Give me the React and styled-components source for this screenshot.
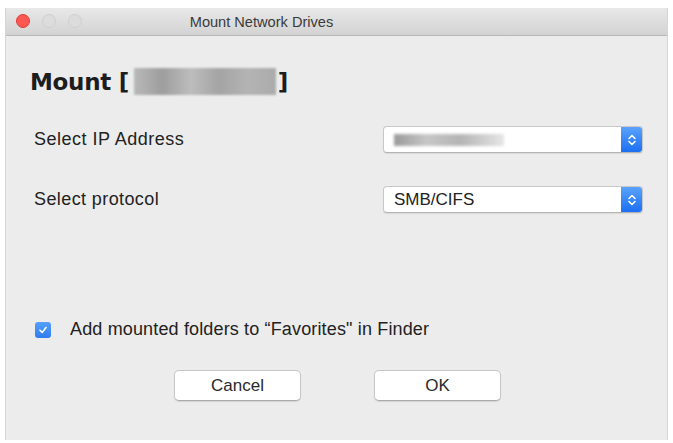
import React, { useState } from 'react';
import styled, { createGlobalStyle } from 'styled-components';

const GlobalStyle = createGlobalStyle`
  html, body {
    margin: 0;
    padding: 0;
    background: #ffffff;
    font-family: "Liberation Sans", Arial, sans-serif;
  }
`;

const Page = styled.div`
  width: 673px;
  height: 443px;
  box-sizing: border-box;
  padding: 8px 5px 3px 5px;
`;

const Window = styled.div`
  height: 100%;
  display: flex;
  flex-direction: column;
  background: #ececec;
  border-left: 1px solid #d6d6d6;
  border-right: 1px solid #d6d6d6;
  box-sizing: border-box;
`;

// title sits left of centre: the original window was wider than the crop
const TitleBar = styled.div`
  height: 27px;
  position: relative;
  display: flex;
  align-items: center;
  justify-content: center;
  padding-right: 150px;
  background: linear-gradient(#e8e8e8, #d3d3d3);
  border-bottom: 1px solid #b8b8b8;
  font-size: 14.6px;
  color: #3a3a3a;
`;

const Lights = styled.div`
  position: absolute;
  left: 10px;
  top: 6px;
  display: flex;
  gap: 12px;
`;

const Light = styled.span`
  width: 14px;
  height: 14px;
  border-radius: 50%;
  box-sizing: border-box;
  background: ${p => (p.red ? '#fc5753' : '#dcdcdc')};
  border: 1px solid ${p => (p.red ? '#df3d39' : '#cfcfcf')};
`;

const Content = styled.div`
  flex: 1;
  display: flex;
  flex-direction: column;
  padding: 32px 24px 0 24px;
`;

const Heading = styled.h1`
  margin: 0 0 31px 0;
  display: flex;
  align-items: center;
  font-family: "DejaVu Sans", sans-serif;
  font-size: 23px;
  font-weight: bold;
  color: #1d1d1d;
  letter-spacing: -0.3px;
`;

const Blurred = styled.span`
  display: inline-block;
  width: 142px;
  height: 27px;
  margin: 0 2px 0 5px;
  background: linear-gradient(90deg, #b9b9b9, #9e9e9e 20%, #bdbdbd 40%, #a4a4a4 60%, #b4b4b4 80%, #ababab);
  filter: blur(1px);
`;

const Row = styled.div`
  display: flex;
  align-items: center;
  justify-content: space-between;
  height: 27px;
  margin-bottom: 33px;
  padding-left: 4px;
`;

const Label = styled.span`
  font-size: 18px;
  letter-spacing: ${p => p.spacing || '0.5px'};
  color: #222;
`;

const Select = styled.div`
  width: 258px;
  height: 25px;
  display: flex;
  background: #ffffff;
  border: 1px solid #c8c8c8;
  border-bottom-color: #b4b4b4;
  border-radius: 4px;
  box-shadow: 0 1px 1px rgba(0, 0, 0, 0.08);
  overflow: hidden;
`;

const SelectText = styled.div`
  flex: 1;
  display: flex;
  align-items: center;
  padding-left: 10px;
  font-size: 17px;
  color: #222;
`;

const BlurValue = styled.span`
  width: 110px;
  height: 12px;
  background: linear-gradient(90deg, #9a9a9a, #c6c6c6 30%, #b4b4b4 60%, #e6e6e6);
  filter: blur(1.5px);
`;

const Stepper = styled.div`
  width: 21px;
  display: flex;
  align-items: center;
  justify-content: center;
  background: linear-gradient(#5aa2fb, #1c6ff2);
`;

const Spacer = styled.div`
  flex: 1;
`;

const CheckRow = styled.label`
  display: flex;
  align-items: center;
  gap: 19px;
  padding-left: 5px;
  margin-bottom: 30px;
  font-size: 18px;
  letter-spacing: 0.15px;
  color: #222;
`;

const Box = styled.span`
  width: 16px;
  height: 16px;
  border-radius: 3px;
  background: linear-gradient(#56a0fa, #2f7cf0);
  display: flex;
  align-items: center;
  justify-content: center;
`;

const Buttons = styled.div`
  display: flex;
  gap: 73px;
  padding-left: 144px;
  margin-bottom: 39px;
`;

const Button = styled.button`
  width: 127px;
  height: 31px;
  background: #ffffff;
  border: 1px solid #c6c6c6;
  border-bottom-color: #aaaaaa;
  border-radius: 5px;
  box-shadow: 0 1px 1px rgba(0, 0, 0, 0.1);
  font-family: "Liberation Sans", Arial, sans-serif;
  font-size: 17px;
  color: #2a2a2a;
`;

const Chevrons = () => (
  <svg width="10" height="14" viewBox="0 0 10 14">
    <path d="M2 5.5 L5 2.5 L8 5.5 M2 8.5 L5 11.5 L8 8.5" fill="none" stroke="#fff" strokeWidth="1.5" strokeLinecap="round" strokeLinejoin="round" />
  </svg>
);

const App = () => {
  const [checked] = useState(true);

  return (
    <Page>
      <GlobalStyle />
      <Window>
        <TitleBar>
          <Lights>
            <Light red />
            <Light />
            <Light />
          </Lights>
          Mount Network Drives
        </TitleBar>
        <Content>
          <Heading>
            Mount [<Blurred />]
          </Heading>
          <Row>
            <Label>Select IP Address</Label>
            <Select>
              <SelectText><BlurValue /></SelectText>
              <Stepper><Chevrons /></Stepper>
            </Select>
          </Row>
          <Row>
            <Label spacing="0.4px">Select protocol</Label>
            <Select>
              <SelectText>SMB/CIFS</SelectText>
              <Stepper><Chevrons /></Stepper>
            </Select>
          </Row>
          <Spacer />
          <CheckRow>
            <Box>
              {checked && (
                <svg width="10" height="10" viewBox="0 0 10 10">
                  <path d="M2 5.2 L4.2 7.5 L8 2.5" fill="none" stroke="#fff" strokeWidth="1.6" strokeLinecap="round" strokeLinejoin="round" />
                </svg>
              )}
            </Box>
            Add mounted folders to “Favorites" in Finder
          </CheckRow>
          <Buttons>
            <Button>Cancel</Button>
            <Button>OK</Button>
          </Buttons>
        </Content>
      </Window>
    </Page>
  );
};

export default App;
